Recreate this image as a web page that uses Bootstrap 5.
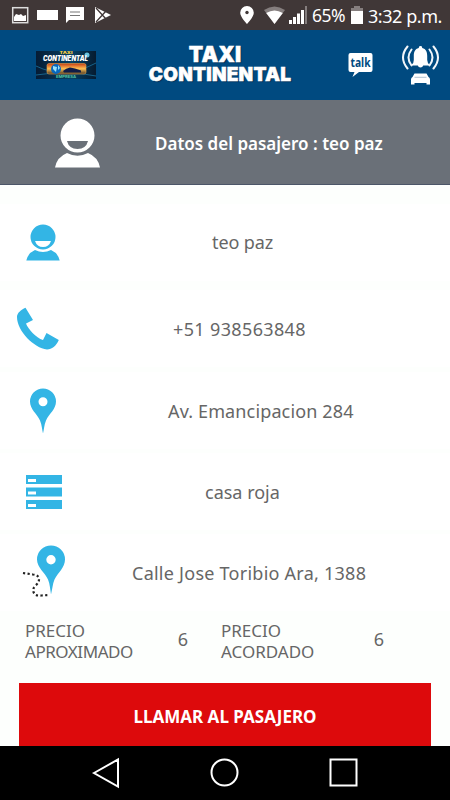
<!DOCTYPE html>
<html lang="es">
<head>
<meta charset="utf-8">
<meta name="viewport" content="width=device-width, initial-scale=1">
<title>Taxi Continental</title>
<link href="https://cdn.jsdelivr.net/npm/bootstrap@5.3.0/dist/css/bootstrap.min.css" rel="stylesheet">
<style>
body{font-family:"Noto Sans","Open Sans",sans-serif;background:#fdfffd;color:#666;font-size:17px;line-height:21px;overflow:hidden}
svg{display:block;flex:none}
.screen{width:450px;height:800px}
.statusbar{height:30px;background:#403737;color:#fff;font-size:18px;padding-left:11px;padding-right:6px;letter-spacing:-.45px}
.statusbar .pct{width:34px;font-size:17.5px;padding-top:1px}
.statusbar .clock{width:76px;padding-top:2px}
.brandbar{height:70px;background:#004a80;padding-left:36px}
.brandname{font:900 19px/20px Inter,"Liberation Sans",sans-serif;width:146px;margin-left:51px;text-align:center;color:#fff;text-shadow:1px 1px 1px #002b50;letter-spacing:.2px;-webkit-text-stroke:.5px #fff}
.brandname .top-line{font-size:21px;padding-right:10px}
.passenger{height:85px;background:#6a7078;color:#fff;border-bottom:1px solid #4c5668;padding-left:55px;padding-top:2px;font-weight:600}
.passenger span{margin-left:54px}
.datum{height:77px;background:#fff;font-size:18px}
.datum .pic{width:86px}
.blue{fill:#33b5e5}
.rows{padding-top:19px;height:428px}
.gap-a{margin-top:9px}.gap-b{margin-top:5px}.gap-c{margin-top:4px}
.s1{margin-left:126px;letter-spacing:-.1px}
.s2{margin-left:87px;letter-spacing:.36px;padding-top:1px}
.s3{margin-left:82px;letter-spacing:.14px;padding-top:1px}
.s4{margin-left:119px;padding-top:2px}
.s5{margin-left:46px;letter-spacing:.25px;padding-top:2px}
.prices{height:70px;padding-left:25px;padding-top:7px}
.prices .price-label{width:138px}
.prices .second{margin-left:18px}
.prices .tight{letter-spacing:-.45px}
.prices .amount{width:40px;margin-top:9px;font-size:18px}
.call{height:63px;margin:0 19px;background:#dd0a0c;color:#fff;font-weight:700;font-size:17px;border-radius:0}
.call:hover{background:#c70909;color:#fff}
.softkeys{height:54px;background:#000}
.softkeys svg{fill:none;stroke:#fff;stroke-width:2}
.phone-pic{margin-left:16px}.route-pic{margin-left:22px;margin-bottom:3px}
.alarm{margin-left:27px;margin-right:9px}
</style>
</head>
<body>
<div class="screen d-flex flex-column">
<div class="statusbar d-flex align-items-center text-nowrap">
<svg width="105" height="30"><rect x="1.700" y="7.700" width="15" height="15" fill="none" stroke="#ddd" stroke-width="1.500"/><path d="M3 21v-4l2-3 3 1 2-1 2 2 3-1v6z" fill="#fff"/><path fill="#fff" d="M26 10h21v10H26zM55 7h18v13H58l-3 3z"/><path stroke="#777" stroke-width="1.200" d="M59 12h10M59 15.500h10"/><path fill="#fff" d="M84 7l16 8-16 8z"/><path stroke="#403737" stroke-width="1.300" fill="none" d="M85 8l10 11M85 22l10-11"/></svg>
<svg class="ms-auto" width="72" height="30"><path fill="#fff" d="M7 6a6.800 6.800 0 0 1 6.800 6.800C13.800 17 7 24 7 24S.2 17 .2 12.800A6.800 6.800 0 0 1 7 6z"/><circle cx="7" cy="12.500" r="1.700" fill="#403737"/><path fill="#857e7e" d="M24 10q10.500-7 21 0L34.500 24z"/><path fill="#fff" d="M26.200 13q8.300-5 16.600 0L34.500 24z"/><path fill="#fff" d="M49 20h3v4h-3zM53 17h3v7h-3zM57 13.500h3V24h-3zM61 10h3v14h-3z"/><path fill="#857e7e" d="M65 6h2v18h-2z"/></svg>
<span class="pct">65%</span>
<svg class="mx-1" width="14" height="30"><path fill="#857e7e" d="M4 6h6v2h3v4H1V8h3z"/><path fill="#fff" d="M1 11h12v13H1z"/></svg>
<span class="clock">3:32 p.m.</span>
</div>
<div class="brandbar d-flex align-items-center">
<svg width="60" height="28" viewBox="0 0 60 28"><defs><linearGradient id="sea" x2="1"><stop stop-color="#061c35"/><stop offset=".6" stop-color="#064063"/><stop offset="1" stop-color="#061b30"/></linearGradient><linearGradient id="sun" x2="0" y2="1"><stop stop-color="#c73d16"/><stop offset=".5" stop-color="#ffc052"/><stop offset="1" stop-color="#4d3b27"/></linearGradient></defs><rect width="60" height="28" fill="url(#sea)"/><path d="M0 15q28 14 60-3M0 24q31-5 60 1" stroke="#17628a" fill="none"/><rect x="11" y="12.500" width="39" height="10.500" rx="2" fill="url(#sun)" stroke="#e4a249" stroke-width=".6"/><circle cx="20" cy="18" r="5" fill="#0868bd"/><path d="M17 15l4 1-1 5-3-3zM22 14l2 3-2 2z" fill="#9be2fa"/><path d="M27 20q3-3 7-3.500l5 1 6 2v2H28z" fill="#101c47"/><circle cx="51" cy="4" r="2.500" fill="#69c3df"/><text x="30" y="3.300" font-family="Inter" font-size="3.500" font-weight="900" fill="#f5cf45" text-anchor="middle" textLength="13" lengthAdjust="spacingAndGlyphs">TAXI</text><text x="29.500" y="10" font-family="Inter" font-size="7" font-weight="900" font-style="italic" fill="#fff" text-anchor="middle" textLength="45" lengthAdjust="spacingAndGlyphs">CONTINENTAL</text><text x="30" y="26.800" font-family="Inter" font-size="3.400" font-weight="700" fill="#57c7a1" text-anchor="middle" textLength="20" lengthAdjust="spacingAndGlyphs">EMPRESA</text></svg>
<div class="brandname"><div class="top-line">TAXI</div><div>CONTINENTAL</div></div>
<svg class="ms-auto" width="26" height="70"><path fill="#fff" d="M2.500 23h20a2 2 0 0 1 2 2v15a2 2 0 0 1-2 2H11l-6.500 5 2-5h-4a2 2 0 0 1-2-2V25a2 2 0 0 1 2-2z"/><text x="12.500" y="37" text-anchor="middle" font-family="Noto Sans" font-weight="700" font-size="12.500" textLength="20" lengthAdjust="spacingAndGlyphs" fill="#004a80">talk</text></svg>
<svg class="alarm" width="40" height="70" viewBox="0 0 40 70"><g fill="#fff"><path d="M19.500 16a1.700 1.700 0 0 1 1.700 2c4 1 5 4 5 8v4q.3 3 2 4.500v1h-6a2.800 2.800 0 0 1-5.400 0h-6v-1q2-1.500 2-4.500v-4c0-4 1-7 5-8a1.700 1.700 0 0 1 1.700-2z"/><path d="M13.500 43.500h12l2 3.500q1.500.8 1.500 2.500v5h-3.500V53h-12v1.500H10v-5q0-1.700 1.500-2.500z"/></g><path d="M13.500 47.300h12" stroke="#9db4c6" stroke-width=".8"/><g fill="none" stroke="#f2f6fa" stroke-width="2" stroke-linecap="round"><path d="M6.500 16.500q-9 11 0 22M10.500 19.500q-6 8 0 16M32.500 16.500q9 11 0 22M28.500 19.500q6 8 0 16"/></g></svg>
</div>
<div class="passenger d-flex align-items-center">
<svg width="46" height="50" viewBox="0 0 46 50"><path fill="#fff" d="M22.500 0.500a17 17 0 1 1 0 34 17 17 0 0 1 0-34M0 49.500q2-10.500 12-14.500 10.500 5.500 21 0 10 4 12 14.500z"/><path fill="#6a7078" d="M12 23h21q-2 8-10.500 8T12 23z"/></svg>
<span class="text-nowrap">Datos del pasajero : teo paz</span>
</div>
<div class="rows text-nowrap">
<div class="datum d-flex align-items-center"><div class="pic"><svg class="mx-auto" width="34" height="37" viewBox="0 0 34 37"><path class="blue" d="M17 .5a12.500 12.500 0 1 1 0 25 12.500 12.500 0 0 1 0-25M.3 36.500Q2 29 9 26q8 4 16 0 7 3 8.700 10.500z"/><path fill="#fff" d="M9 17h16q-2 6-8 6t-8-6z"/></svg></div><span class="s1">teo paz</span></div>
<div class="datum gap-a d-flex align-items-center"><div class="pic"><svg class="phone-pic" width="43" height="43" viewBox="0 0 43 43"><path class="blue" d="M9.500.8C5 3 1 6 1 10c0 14 17 31 30 32.500 5 0 9-3.500 11.800-9.500L30.500 26 27 33C20 31 12 22 10 16.500l7-3.500z"/></svg></div><span class="s2">+51 938563848</span></div>
<div class="datum gap-b d-flex align-items-center"><div class="pic"><svg class="mx-auto" width="26" height="46" viewBox="0 0 26 46"><path class="blue" fill-rule="evenodd" d="M13 .5a13 13 0 0 1 13 13c0 8-7 12-10 19-2 5-2 9-3 13-1-4-1-8-3-13-3-7-10-11-10-19a13 13 0 0 1 13-13m0 8.700a4.500 4.500 0 1 0 0 9 4.500 4.500 0 0 0 0-9"/></svg></div><span class="s3">Av. Emancipacion 284</span></div>
<div class="datum gap-c d-flex align-items-center"><div class="pic"><svg class="ms-auto me-4" width="36" height="34"><path class="blue" d="M0 0h36v9H0zM0 12.500h36v9H0zM0 25h36v9H0z"/><path fill="#fff" d="M2 4h8v3H2zM2 16.500h8v3H2zM2 29h8v3H2z"/></svg></div><span class="s4">casa roja</span></div>
<div class="datum gap-c d-flex align-items-center"><div class="pic"><svg class="route-pic" width="44" height="52" viewBox="0 0 44 52"><path class="blue" fill-rule="evenodd" d="M29 .5a14 14 0 0 1 14 14c0 8-7 13-10.500 20-2 5-2 9-3.500 15-1-6-1-10-3-15C23 27.500 15 22.500 15 14.500A14 14 0 0 1 29 .5m0 9.500a4.700 4.700 0 1 0 0 9.400 4.700 4.700 0 0 0 0-9.400"/><path d="M1 28l10 1.500q6 .5 6 5 0 3-3.500 6-4 4-1 8.500 2 2 7 1.500l8-.5" stroke="#222" stroke-width="2.200" stroke-dasharray="2.200 2.400" fill="none"/></svg></div><span class="s5">Calle Jose Toribio Ara, 1388</span></div>
</div>
<div class="prices d-flex">
<div class="price-label">PRECIO<br><span class="tight">APROXIMADO</span></div><div class="amount text-center">6</div>
<div class="price-label second">PRECIO<br>ACORDADO</div><div class="amount text-center">6</div>
</div>
<button class="btn call border-0 p-0 pt-1">LLAMAR AL PASAJERO</button>
<div class="softkeys"><svg width="450" height="54"><path d="M94 27l24-13.500v27zM330.500 13.500h26v26h-26z"/><circle cx="224.500" cy="26.500" r="13"/></svg></div>
</div>
<script src="https://cdn.jsdelivr.net/npm/bootstrap@5.3.0/dist/js/bootstrap.bundle.min.js"></script>
</body>
</html>
